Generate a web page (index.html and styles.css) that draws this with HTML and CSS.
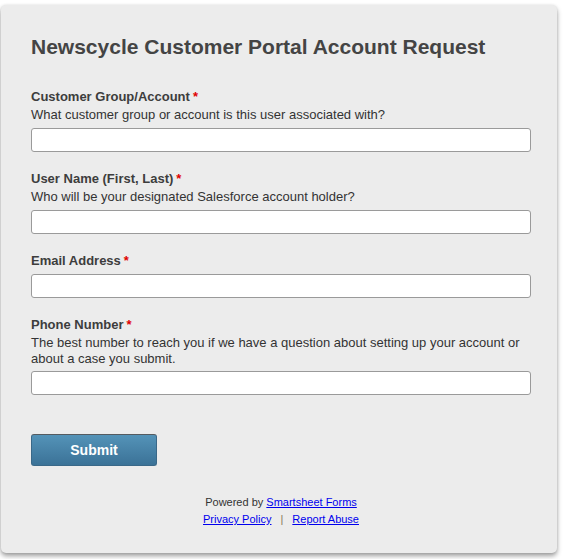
FILE: index.html
```html
<!DOCTYPE html>
<html>
<head>
<meta charset="utf-8">
<link rel="stylesheet" href="styles.css">
</head>
<body>
<div class="page">
  <form class="card">
    <h1 class="title">Newscycle Customer Portal Account Request</h1>

    <div class="field">
      <div class="label">Customer Group/Account<span class="req">*</span></div>
      <div class="desc">What customer group or account is this user associated with?</div>
      <input class="input" type="text">
    </div>

    <div class="field">
      <div class="label">User Name (First, Last)<span class="req">*</span></div>
      <div class="desc">Who will be your designated Salesforce account holder?</div>
      <input class="input" type="text">
    </div>

    <div class="field">
      <div class="label">Email Address<span class="req">*</span></div>
      <input class="input" type="text">
    </div>

    <div class="field">
      <div class="label">Phone Number<span class="req">*</span></div>
      <div class="desc">The best number to reach you if we have a question about setting up your account or about a case you submit.</div>
      <input class="input input-tight" type="text">
    </div>

    <div class="actions">
      <button class="submit" type="button">Submit</button>
    </div>

    <div class="footer">
      <div class="powered">Powered by <a href="#">Smartsheet Forms</a></div>
      <div class="links"><a href="#">Privacy Policy</a><span class="sep">|</span><a href="#">Report Abuse</a></div>
    </div>
  </form>
</div>
</body>
</html>
```

FILE: styles.css
```css
html, body {
  margin: 0;
  padding: 0;
  background: #ffffff;
}

.page {
  padding: 5px 6px 6px 1px;
  font-family: "Liberation Sans", Arial, sans-serif;
}

.card {
  display: block;
  background: #ececec;
  border-radius: 5px;
  box-shadow: 0 3px 5px rgba(0, 0, 0, 0.38), 0 0 3px rgba(0, 0, 0, 0.08);
  padding: 27px 26px 26px 30px;
  height: 548px;
  box-sizing: border-box;
}

.title {
  margin: 0 0 27px 0;
  font-size: 21px;
  line-height: 30px;
  font-weight: bold;
  color: #444444;
}

.field {
  display: flex;
  flex-direction: column;
  margin-bottom: 19px;
}

.label {
  font-size: 13px;
  line-height: 16px;
  font-weight: bold;
  color: #3d3d3d;
}

.req {
  color: #e00000;
  margin-left: 3px;
}

.desc {
  margin-top: 2px;
  font-size: 13px;
  line-height: 16px;
  color: #333333;
}

.input {
  margin: 5px 0 0 0;
  height: 24px;
  box-sizing: border-box;
  border: 1px solid #9a9a9a;
  border-radius: 3px;
  background: #ffffff;
  padding: 0 4px;
  font: 13px "Liberation Sans", Arial, sans-serif;
}

.input-tight {
  margin-top: 4px;
}

.actions {
  padding-top: 20px;
}

.submit {
  width: 126px;
  height: 32px;
  border: 1px solid #3a6888;
  border-top-color: #555b60;
  border-radius: 3px;
  background: linear-gradient(#5493b8, #3b7297);
  color: #ffffff;
  font: bold 14px "Liberation Sans", Arial, sans-serif;
  padding: 0;
}

.footer {
  margin-top: 28px;
  text-align: center;
  font-size: 11px;
  line-height: 17px;
  color: #333333;
}

.footer a {
  color: #0000ee;
  text-decoration: underline;
}

.sep {
  color: #8a7a5a;
  margin: 0 9px;
}
```
